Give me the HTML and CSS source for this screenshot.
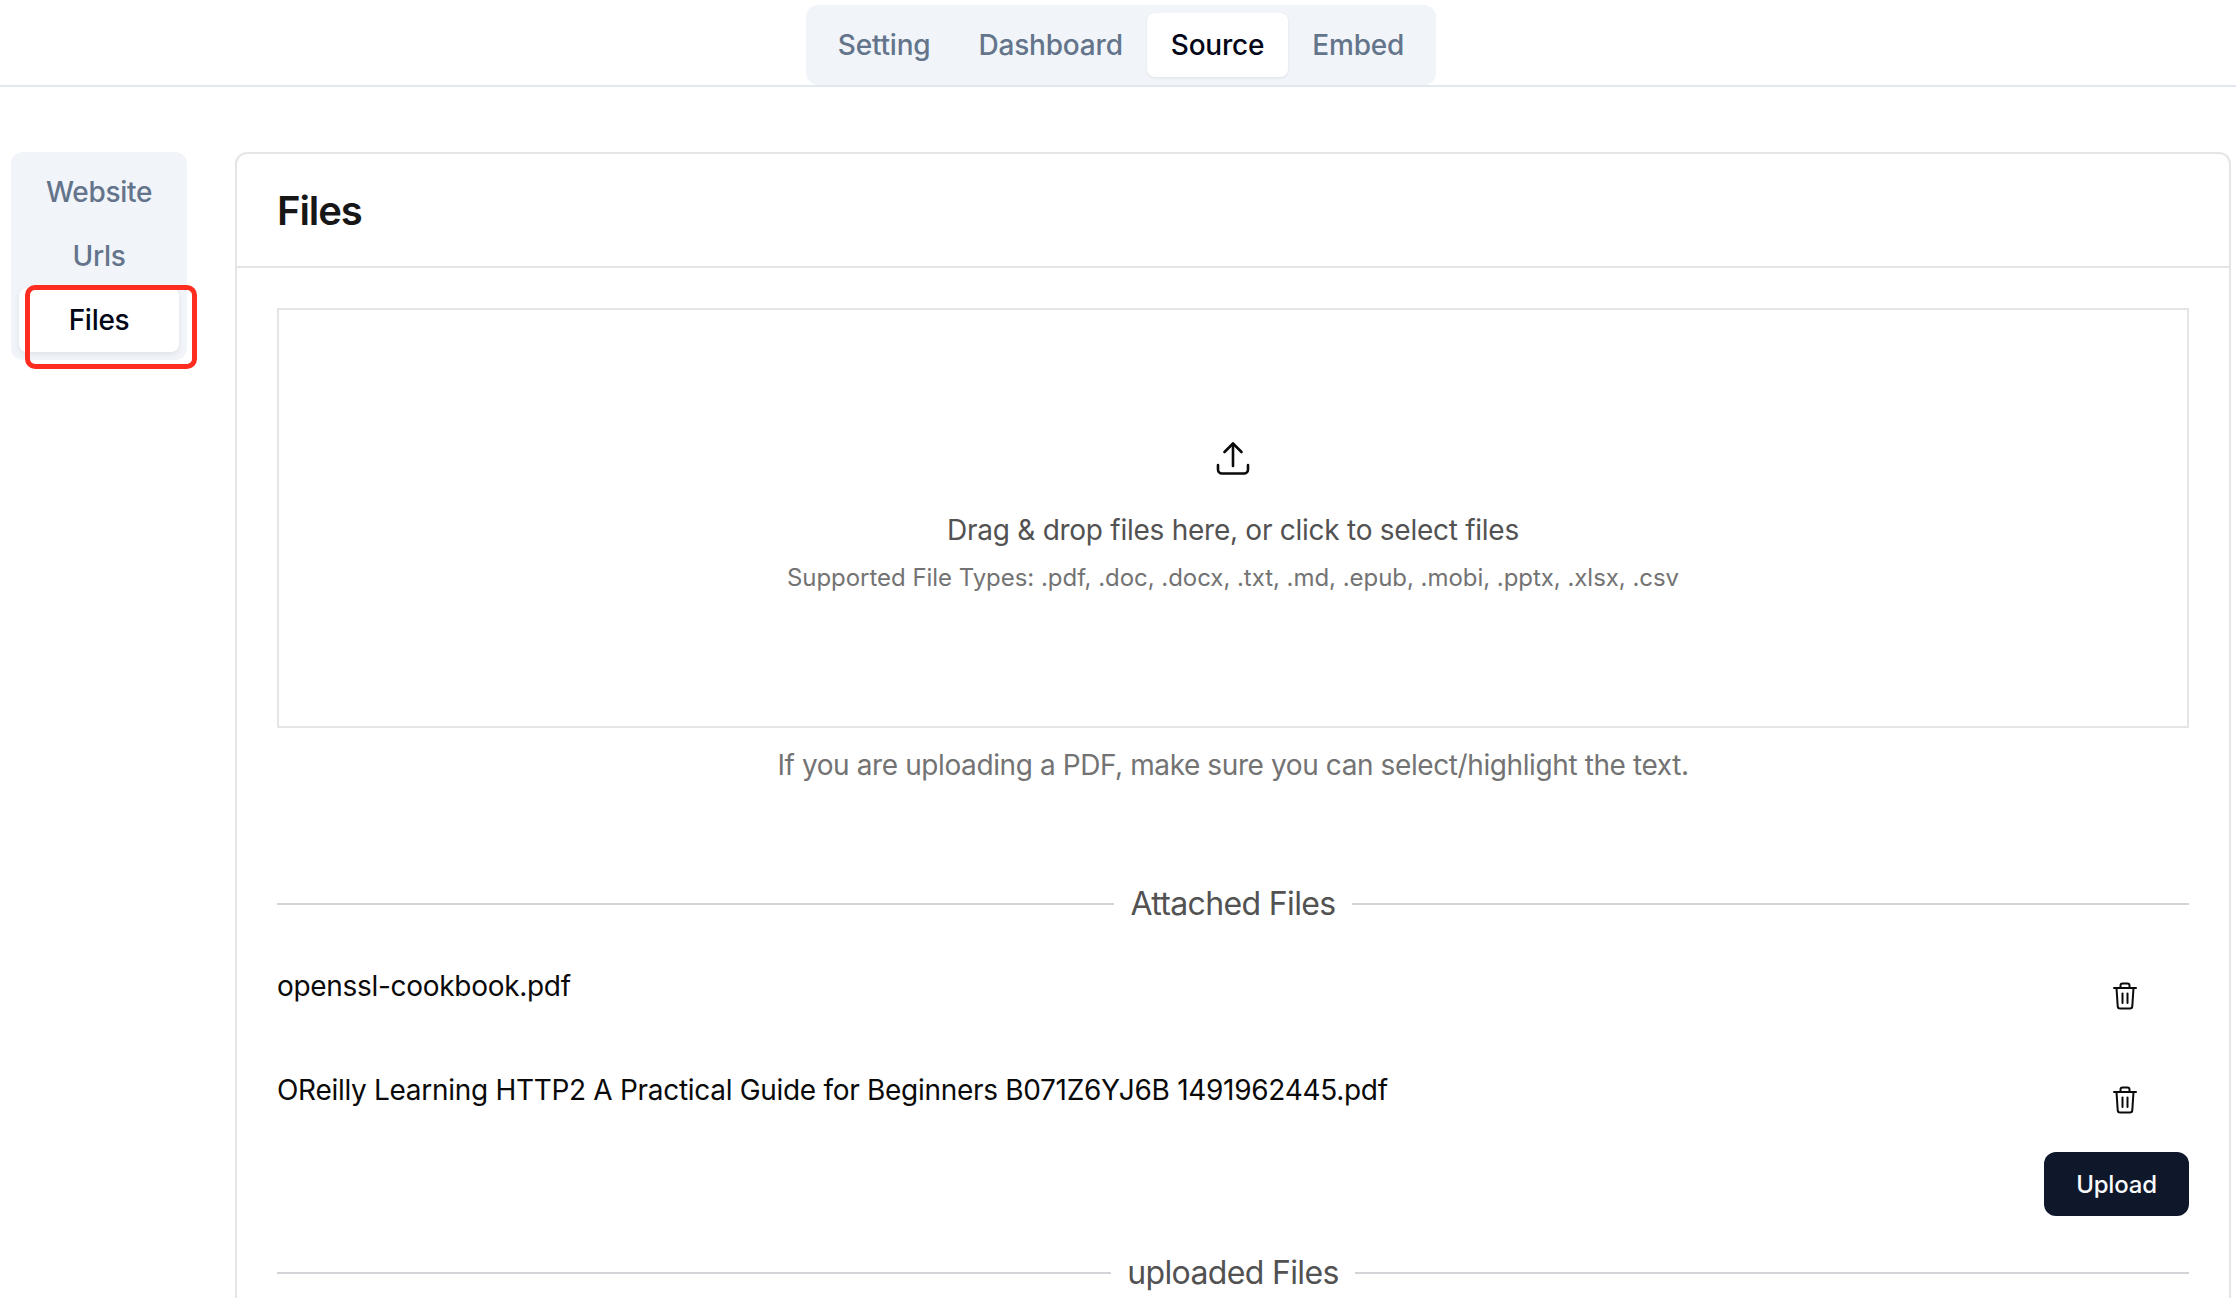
FILE: index.html
```html
<!DOCTYPE html>
<html lang="en">
<head>
    <meta charset="UTF-8">
    <title>Files</title>
    <link rel="stylesheet" href="styles.css">
</head>
<body>
    <header class="topbar">
        <nav class="tabs">
            <a class="tab">Setting</a>
            <a class="tab">Dashboard</a>
            <a class="tab active">Source</a>
            <a class="tab">Embed</a>
        </nav>
    </header>

    <div class="layout">
        <aside class="side-tabs">
            <a class="side-tab">Website</a>
            <a class="side-tab">Urls</a>
            <a class="side-tab active">Files</a>
            <span class="highlight"></span>
        </aside>

        <main class="card">
            <div class="card-header">
                <h1>Files</h1>
            </div>
            <div class="card-body">
                <div class="dropzone">
                    <svg class="upload-icon" viewBox="0 0 36 36" fill="none" stroke="currentColor" stroke-width="2.6" stroke-linecap="round" stroke-linejoin="round">
                        <path d="M18 26V4"/>
                        <path d="M9.500 12L18 3.500L26.500 12"/>
                        <path d="M3 25v4.500a4 4 0 0 0 4 4h22a4 4 0 0 0 4-4V25"/>
                    </svg>
                    <p class="drop-title">Drag &amp; drop files here, or click to select files</p>
                    <p class="drop-types">Supported File Types: .pdf, .doc, .docx, .txt, .md, .epub, .mobi, .pptx, .xlsx, .csv</p>
                </div>
                <p class="note">If you are uploading a PDF, make sure you can select/highlight the text.</p>

                <div class="divider attached">Attached Files</div>

                <div class="file-row">
                    <span class="file-name">openssl-cookbook.pdf</span>
                    <svg class="trash" viewBox="0 0 24 28" fill="none" stroke="currentColor" stroke-width="2" stroke-linecap="round" stroke-linejoin="round">
                        <path d="M1 6h22"/>
                        <path d="M7.500 6V3.500a2 2 0 0 1 2-2h5a2 2 0 0 1 2 2V6"/>
                        <path d="M3.500 6l1.200 18a2.500 2.500 0 0 0 2.500 2.500h9.600a2.500 2.500 0 0 0 2.500-2.500L20.500 6"/>
                        <path d="M9.500 11.500v9.500"/>
                        <path d="M14.500 11.500v9.500"/>
                    </svg>
                </div>
                <div class="file-row">
                    <span class="file-name">OReilly Learning HTTP2 A Practical Guide for Beginners B071Z6YJ6B 1491962445.pdf</span>
                    <svg class="trash" viewBox="0 0 24 28" fill="none" stroke="currentColor" stroke-width="2" stroke-linecap="round" stroke-linejoin="round">
                        <path d="M1 6h22"/>
                        <path d="M7.500 6V3.500a2 2 0 0 1 2-2h5a2 2 0 0 1 2 2V6"/>
                        <path d="M3.500 6l1.200 18a2.500 2.500 0 0 0 2.500 2.500h9.600a2.500 2.500 0 0 0 2.500-2.500L20.500 6"/>
                        <path d="M9.500 11.500v9.500"/>
                        <path d="M14.500 11.500v9.500"/>
                    </svg>
                </div>

                <div class="actions">
                    <button class="btn-upload">Upload</button>
                </div>

                <div class="divider uploaded">uploaded Files</div>
            </div>
        </main>
    </div>
</body>
</html>
```

FILE: styles.css
```css
* {
    margin: 0;
    padding: 0;
    box-sizing: border-box;
    font-family: Inter, 'Noto Sans', sans-serif;
}

html, body {
    height: 1298px;
    overflow: hidden;
}

body {
    background: white;
    color: #0a0a0a;
}

.topbar {
    display: flex;
    justify-content: center;
    height: 87px;
    padding: 5px 0 0 6px;
    border-bottom: 2px solid #e2e8f0;
}

.tabs {
    display: flex;
    height: 80px;
    padding: 8px;
    background: #f1f5f9;
    border-radius: 12px;
}

.tab {
    display: flex;
    align-items: center;
    height: 64px;
    padding: 0 24px;
    font-size: 28px;
    font-weight: 500;
    letter-spacing: -0.2px;
    color: #64748b;
    border-radius: 8px;
}

.tab.active {
    background: white;
    color: #020617;
    box-shadow: 0 1px 3px rgba(0, 0, 0, 0.08);
}

.layout {
    display: flex;
    align-items: flex-start;
    gap: 48px;
    padding: 65px 5px 0 11px;
}

.side-tabs {
    position: relative;
    flex: none;
    display: flex;
    flex-direction: column;
    width: 176px;
    padding: 8px;
    background: #f1f5f9;
    border-radius: 12px;
}

.side-tab {
    display: flex;
    align-items: center;
    justify-content: center;
    height: 64px;
    font-size: 28px;
    font-weight: 500;
    letter-spacing: -0.3px;
    color: #64748b;
    border-radius: 8px;
}

.side-tab.active {
    background: white;
    color: #020617;
    box-shadow: 0 2px 6px rgba(0, 0, 0, 0.08);
}

.highlight {
    position: absolute;
    left: 14px;
    top: 133px;
    width: 172px;
    height: 84px;
    border: 5px solid #ff2d20;
    border-radius: 10px;
}

.card {
    flex: 1;
    min-width: 0;
    border: 2px solid #e5e5e5;
    border-bottom: none;
    border-radius: 12px 12px 0 0;
}

.card-header {
    display: flex;
    align-items: center;
    height: 114px;
    padding: 0 40px;
    border-bottom: 2px solid #e5e5e5;
}

.card-header h1 {
    font-size: 40px;
    font-weight: 600;
    letter-spacing: -1.1px;
    color: #171717;
}

.card-body {
    padding: 40px 40px 40px;
}

.dropzone {
    display: flex;
    flex-direction: column;
    align-items: center;
    height: 420px;
    padding-top: 130px;
    border: 2px solid #e5e5e5;
}

.upload-icon {
    width: 36px;
    height: 36px;
    color: #0a0a0a;
}

.drop-title {
    margin-top: 34px;
    font-size: 28px;
    line-height: 40px;
    letter-spacing: -0.26px;
    color: #525252;
}

.drop-types {
    margin-top: 12px;
    font-size: 24px;
    line-height: 32px;
    letter-spacing: -0.04px;
    color: #737373;
}

.note {
    margin-top: 17px;
    font-size: 28px;
    line-height: 40px;
    letter-spacing: -0.4px;
    text-align: center;
    color: #737373;
}

.divider {
    display: flex;
    align-items: center;
    gap: 16px;
    font-size: 32px;
    line-height: 44px;
    letter-spacing: -0.65px;
    color: #525252;
}

.divider::before, .divider::after {
    content: '';
    flex: 1;
    height: 2px;
    background: #d4d4d8;
}

.attached {
    margin-top: 97px;
}

.uploaded {
    margin-top: 35px;
}

.file-row {
    display: flex;
    justify-content: space-between;
    height: 104px;
}

.attached + .file-row {
    margin-top: 40px;
}

.file-name {
    font-size: 28px;
    line-height: 40px;
    letter-spacing: -0.3px;
    color: #0a0a0a;
}

.trash {
    width: 24px;
    height: 28px;
    margin: 16px 52px 0 0;
}

.actions {
    display: flex;
    justify-content: flex-end;
    margin-top: -22px;
}

.btn-upload {
    width: 145px;
    height: 64px;
    background: #0f172a;
    color: #f8fafc;
    border: none;
    border-radius: 12px;
    font-size: 24px;
    font-weight: 500;
    letter-spacing: -0.2px;
}
```
